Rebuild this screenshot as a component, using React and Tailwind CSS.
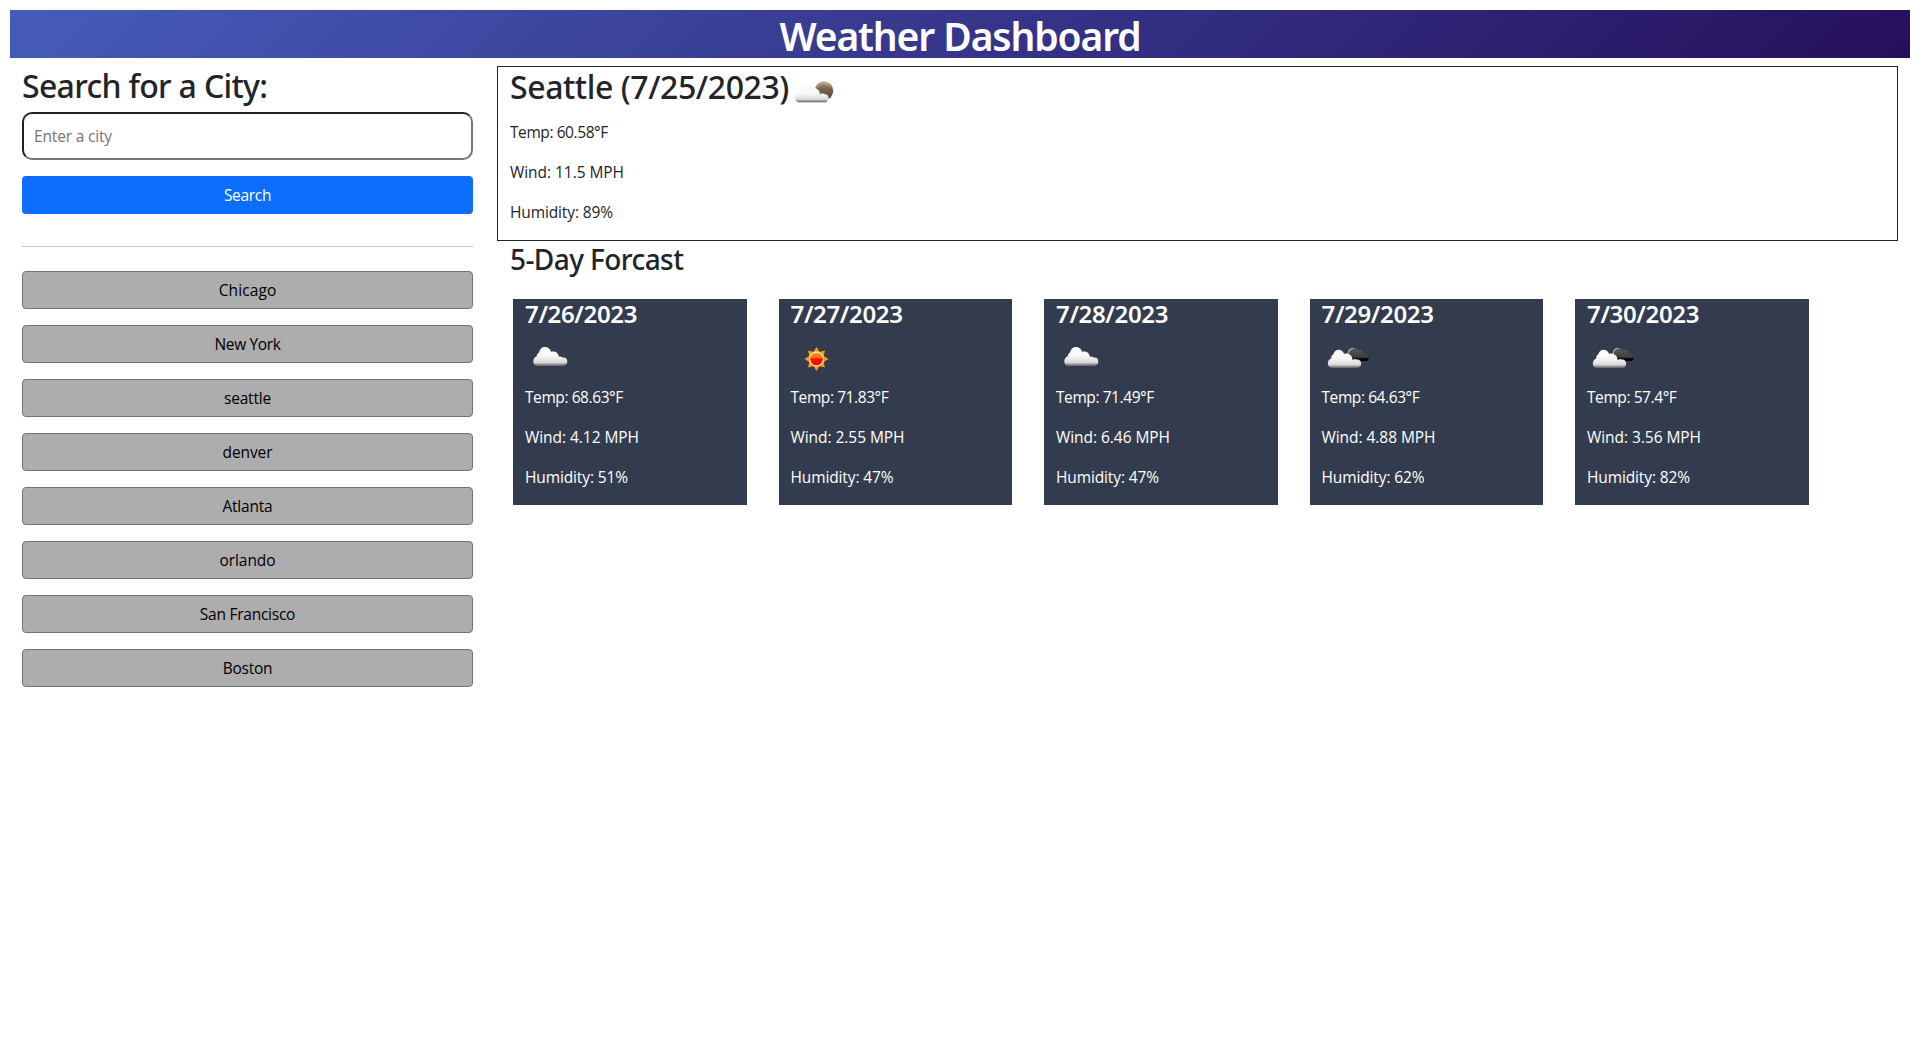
import React from "react";

const CLOUD =
  "M17.6 31 C15 31 13.3 29.2 13.3 26.4 C13.3 23.8 14.7 22 16.6 21.5 C16.8 19.4 17.8 18 19.2 17.2 C19.8 14 21.8 12 24.8 12 C27.9 12 30.2 13.7 31.1 16.8 C34.6 15.6 38.3 17.3 39 21.8 C40.4 21.2 41.6 21.6 42.4 22.6 C45.4 22 47.3 23.7 47.3 26.6 C47.3 29.4 45.6 31 42.6 31 Z";

const BIG_CLOUD =
  "M16.8 33 C14 33 12.3 31.2 12.3 28.4 C12.3 25.8 13.6 24 15.6 23.4 C15.7 21 16.7 19.8 17.8 19.3 C18.3 16.5 20.6 14.7 23 14.7 C25.7 14.7 27.6 16 28.6 18.8 C32.6 17.6 36.8 19.7 37.2 25 C38.8 23.6 40.4 23.8 41.4 24.6 C44 24.2 45.7 26 45.7 28.8 C45.7 31.4 44 33 41.4 33 Z";

function CloudGradient({ id }) {
  return (
    <linearGradient id={id} x1="0" y1="0" x2="0" y2="1">
      <stop offset="0" stopColor="#ffffff" />
      <stop offset="0.45" stopColor="#f8f8f8" />
      <stop offset="0.8" stopColor="#dcdcdc" />
      <stop offset="0.86" stopColor="#c0c0c0" />
      <stop offset="0.93" stopColor="#858585" />
      <stop offset="1" stopColor="#6b6b6b" />
    </linearGradient>
  );
}

function CloudIcon({ id }) {
  return (
    <svg className="-ml-[5px] block" width="60" height="45" viewBox="0 0 60 45">
      <defs>
        <CloudGradient id={id} />
      </defs>
      <path d={CLOUD} fill={`url(#${id})`} />
    </svg>
  );
}

function SunIcon({ id }) {
  return (
    <svg className="-ml-[6px] block" width="60" height="45" viewBox="-0.5 0 60 45">
      <defs>
        <linearGradient id={id} x1="0" y1="0" x2="0" y2="1">
          <stop offset="0" stopColor="#ff9a1a" />
          <stop offset="0.38" stopColor="#ff6a10" />
          <stop offset="0.5" stopColor="#ff1405" />
          <stop offset="1" stopColor="#ff0000" />
        </linearGradient>
      </defs>
      <g fill="#f79a12">
        {[0, 45, 90, 135, 180, 225, 270, 315].map((a) => (
          <path key={a} d="M27.6 17.5 L31 12 L34.4 17.5 Z" transform={`rotate(${a} 31 24)`} />
        ))}
      </g>
      <circle cx="31" cy="24" r="7.6" fill="#ffe3b8" />
      <circle cx="31" cy="24" r="6.3" fill={`url(#${id})`} />
    </svg>
  );
}

function BrokenCloudsIcon({ id }) {
  return (
    <svg className="-ml-[6px] block" width="60" height="45" viewBox="0.5 0 60 45">
      <defs>
        <CloudGradient id={id} />
        <linearGradient id={id + "d"} x1="0" y1="0" x2="0" y2="1">
          <stop offset="0" stopColor="#5e5e5e" />
          <stop offset="0.72" stopColor="#3d3d3d" />
          <stop offset="0.82" stopColor="#080808" />
          <stop offset="1" stopColor="#000000" />
        </linearGradient>
      </defs>
      <path
        d="M32 20.5 C32 15.4 34.5 12.8 37.8 12.8 C40.2 12.8 41.8 13.7 42.6 15.2 C45.6 14.4 47.4 16 48 18.6 C51.4 18.6 53.4 20 53.4 22.4 C53.4 24.8 52 26 49.6 26 L36 26 Z"
        fill={`url(#${id}d)`}
      />
      <path d="M32.6 19 C33 15.4 35 13.3 38 13.3" fill="none" stroke="#b5b2ad" strokeWidth="1.2" />
      <path d={BIG_CLOUD} fill={`url(#${id})`} stroke="#323c4e" strokeOpacity="0.25" strokeWidth="0.5" />
    </svg>
  );
}

function NightCloudIcon() {
  return (
    <svg className="mt-[14px] ml-[6px] block shrink-0" width="42" height="24" viewBox="0 0 42 24">
      <defs>
        <linearGradient id="moon" x1="0" y1="0" x2="0" y2="1">
          <stop offset="0" stopColor="#b39a86" />
          <stop offset="0.4" stopColor="#7d634c" />
          <stop offset="1" stopColor="#54402f" />
        </linearGradient>
        <linearGradient id="hero" x1="0" y1="0" x2="0" y2="1">
          <stop offset="0" stopColor="#fdfdfd" />
          <stop offset="0.5" stopColor="#f7f7f7" />
          <stop offset="0.8" stopColor="#dedede" />
          <stop offset="0.87" stopColor="#bdbdbd" />
          <stop offset="0.94" stopColor="#7b7b7b" />
          <stop offset="1" stopColor="#747474" />
        </linearGradient>
      </defs>
      <circle cx="29" cy="9.8" r="9.3" fill="url(#moon)" />
      <path d="M22 6.5 A7.8 7.8 0 0 1 35.3 5.4" fill="none" stroke="#d8cbc0" strokeWidth="0.8" />
      <path
        d={BIG_CLOUD}
        transform="translate(-12.2 -11.4)"
        fill="url(#hero)"
        stroke="#f0f0f0"
        strokeWidth="0.4"
      />
    </svg>
  );
}

const CITIES = [
  ["Chicago", "tracking-[0.1px]"],
  ["New York", "tracking-[-0.35px]"],
  ["seattle", "tracking-[-0.2px]"],
  ["denver", "tracking-[-0.1px]"],
  ["Atlanta", "tracking-[-0.2px]"],
  ["orlando", "tracking-[-0.1px]"],
  ["San Francisco", "tracking-[-0.25px]"],
  ["Boston", "tracking-[-0.25px]"],
];

const DAYS = [
  { date: "7/26/2023", icon: CloudIcon, temp: "68.63", wind: "4.12", humidity: 51 },
  { date: "7/27/2023", icon: SunIcon, temp: "71.83", wind: "2.55", humidity: 47 },
  { date: "7/28/2023", icon: CloudIcon, temp: "71.49", wind: "6.46", humidity: 47 },
  { date: "7/29/2023", icon: BrokenCloudsIcon, temp: "64.63", wind: "4.88", humidity: 62 },
  { date: "7/30/2023", icon: BrokenCloudsIcon, temp: "57.4", wind: "3.56", humidity: 82 },
];

function Stats({ temp, wind, humidity }) {
  return (
    <div className="flex flex-col gap-4 leading-6 whitespace-nowrap">
      <p className="tracking-[-0.42px]">{`Temp: ${temp}°F`}</p>
      <p className="tracking-[-0.05px]">{`Wind: ${wind} MPH`}</p>
      <p className="tracking-[-0.12px]">{`Humidity: ${humidity}%`}</p>
    </div>
  );
}

export default function App() {
  return (
    <div className="min-h-screen bg-white p-2.5 font-['Open_Sans','Noto_Sans',sans-serif] text-[15.5px] text-[#212529]">
      <header className="flex h-12 items-center justify-center bg-linear-[135deg,#465cba,#26105c]">
        <h1 className="pt-[3px] font-['Noto_Sans',sans-serif] text-[39px] leading-[45px] font-semibold tracking-[-1.1px] whitespace-nowrap text-white">
          Weather Dashboard
        </h1>
      </header>
      <div className="flex">
        <aside className="w-[475px] px-3 pt-[9px]">
          <h2 className="font-['Noto_Sans',sans-serif] text-[32px] leading-[38px] font-medium tracking-[-0.68px] whitespace-nowrap">
            Search for a City:
          </h2>
          <input
            className="mt-[7px] block h-12 w-full rounded-[10px] border-2 border-t-[#212121] border-r-[#767676] border-b-[#767676] border-l-[#212121] px-2.5 tracking-[-0.17px] placeholder:text-[#757575]"
            placeholder="Enter a city"
          />
          <button className="mt-4 block h-[38px] w-full rounded-[4px] bg-[#0d6efd] leading-6 tracking-[-0.32px] text-white">
            Search
          </button>
          <hr className="mt-8 mb-6 border-t border-[#c8c9ca]" />
          <div className="flex flex-col gap-4">
            {CITIES.map(([name, tracking]) => (
              <button
                key={name}
                className={`h-[38px] w-full rounded-[4px] border border-[#6c757d] bg-[#adadad] leading-6 text-black ${tracking}`}
              >
                {name}
              </button>
            ))}
          </div>
        </aside>
        <main className="flex-1 px-3 pt-2">
          <section className="h-[175px] border border-[#212529] px-3">
            <div className="flex h-[53px] items-start">
              <h2 className="pt-px font-['Noto_Sans',sans-serif] text-[32px] leading-[38px] font-medium tracking-[-0.42px] whitespace-nowrap">
                Seattle (7/25/2023)
              </h2>
              <NightCloudIcon />
            </div>
            <Stats temp="60.58" wind="11.5" humidity={89} />
          </section>
          <h3 className="pt-px pl-[13px] font-['Noto_Sans',sans-serif] text-[28px] leading-[34px] font-medium tracking-[-0.58px] whitespace-nowrap">
            5-Day Forcast
          </h3>
          <div className="mt-[23px] flex gap-8 pl-4">
            {DAYS.map(({ date, icon: Icon, ...stats }, i) => (
              <article key={date} className="h-[206px] w-[233.5px] bg-[#323c4e] px-3 text-white">
                <h4 className="font-['Noto_Sans',sans-serif] text-2xl leading-[29px] font-semibold tracking-[-0.35px]">
                  {date}
                </h4>
                <div className="mt-[7px] mb-[5px]">
                  <Icon id={`sky${i}`} />
                </div>
                <Stats {...stats} />
              </article>
            ))}
          </div>
        </main>
      </div>
    </div>
  );
}
